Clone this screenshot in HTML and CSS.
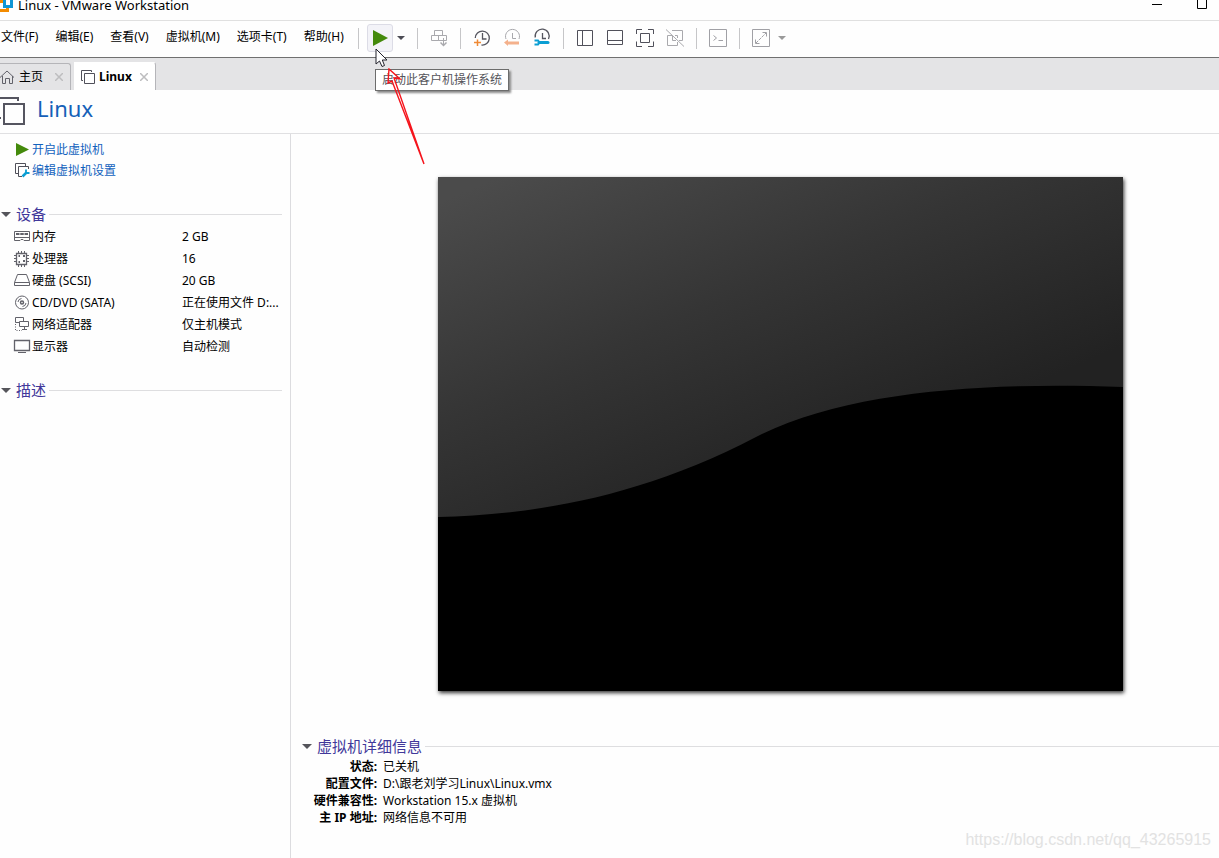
FILE: index.html
```html
<!DOCTYPE html>
<html lang="zh-CN">
<head>
<meta charset="utf-8">
<title>Linux - VMware Workstation</title>
<link rel="stylesheet" href="styles.css">
</head>
<body>
<header class="titlebar">
  <svg class="logo" width="14" height="13" viewBox="0 0 14 13" fill="none" stroke-width="3"><path d="M0 10.500H7.500V5" stroke="#f38b00"/><path d="M4.500 0V6.500H11.500V0" stroke="#0e95d4"/><path d="M0 1.500H3" stroke="#f38b00"/></svg>
  <h1 class="window-title">Linux - VMware Workstation</h1>
  <button class="win-button" aria-label="最小化"><svg width="12" height="12"><path d="M1 4.500H11" stroke="#000"/></svg></button>
  <button class="win-button" aria-label="最大化"><svg width="12" height="12"><path d="M1.500 0V8.500H10.500V0" fill="none" stroke="#000"/></svg></button>
</header>

<div class="menubar">
  <nav class="menus">
    <button>文件(F)</button><button>编辑(E)</button><button>查看(V)</button><button>虚拟机(M)</button><button>选项卡(T)</button><button>帮助(H)</button>
  </nav>
  <div class="toolbar">
    <span class="sep"></span>
    <div class="play-wrap">
      <button class="tool play" aria-label="启动此客户机操作系统"><svg width="16" height="16"><path d="M1 0L16 8L1 16Z" fill="#448a0c"/></svg></button>
      <div class="tooltip" role="tooltip">启动此客户机操作系统</div>
    </div>
    <button class="caret" aria-label="电源选项"><svg width="8" height="4"><path d="M0 0H8L4 4Z" fill="#4c4c54"/></svg></button>
    <span class="sep"></span>
    <button class="tool" aria-label="发送 Ctrl+Alt+Del"><svg width="20" height="20" fill="none" stroke="#a9a9ad"><path d="M5.500 2.500H13.500V7.500H5.500ZM2.500 7.500H9.500V12.500H2.500ZM9.500 7.500H17.500V12.500H9.500ZM14.500 10V17" /><path d="M11.500 14.500L14.500 17.500L17.500 14.500" stroke-width="1.500"/></svg></button>
    <span class="sep"></span>
    <button class="tool" aria-label="拍摄快照"><svg width="20" height="20" fill="none" stroke="#56565f"><path d="M3.300 10A7 7 0 1 1 9.500 17M10.500 5V11H14.500" stroke-width="1.300"/><path d="M5.500 11.500V18M2 14.500H9" stroke="#ef8a35" stroke-width="1.500"/></svg></button>
    <button class="tool" aria-label="恢复快照"><svg width="20" height="20" fill="none" stroke="#a9a9ad"><path d="M4 11A7 7 0 1 1 17 11M10.500 5V10.500H14"/><path d="M2 14.500L6 11.500V13.500H17V16.500H6V18Z" fill="#f4b18c" stroke="none"/></svg></button>
    <button class="tool" aria-label="管理快照"><svg width="20" height="20" fill="none" stroke="#56565f"><path d="M3.300 9.500A7 7 0 1 1 16.500 11M10.500 5V10.500H14" stroke-width="1.300"/><path d="M7 14.500H16" stroke="#0b9ed3" stroke-width="3" stroke-linecap="round"/><path d="M2.500 12.500H6L7.500 14.500L6 16.500H2.500" stroke="#0b9ed3" stroke-width="2"/></svg></button>
    <span class="sep"></span>
    <button class="tool" aria-label="显示库"><svg width="20" height="20" fill="none" stroke="#50505a"><path d="M2.500 2.500H17.500V17.500H2.500ZM7.500 2V18"/></svg></button>
    <button class="tool" aria-label="显示缩略图"><svg width="20" height="20" fill="none" stroke="#50505a"><path d="M2.500 2.500H17.500V16.500H2.500ZM2 12.500H18"/></svg></button>
    <button class="tool" aria-label="全屏"><svg width="20" height="20" fill="none" stroke="#50505a"><path d="M1.500 6V1.500H7M13 1.500H18.500V6M18.500 13.500V18.500H13M7 18.500H1.500V13.500M5.500 5.500H14.500V14.500H5.500Z"/></svg></button>
    <button class="tool" aria-label="Unity 模式"><svg width="20" height="20" fill="none" stroke="#a9a9ad"><path d="M7 2.500H17.500V12.500H14M7.500 7.500H2.500V17.500H12.500V14M7.500 8V12.500H11M10 7.500H12.500V10M1 1.500L19 18.500"/></svg></button>
    <span class="sep"></span>
    <button class="tool" aria-label="控制台"><svg width="20" height="20" fill="none" stroke="#a0a0a5"><path d="M1.500 1.500H18.500V18.500H1.500Z"/><path d="M5.500 7.500L8.500 10L5.500 12.500M10.500 12.500H15"/></svg></button>
    <span class="sep"></span>
    <button class="tool" aria-label="拉伸客户机"><svg width="20" height="20" fill="none" stroke="#a0a0a5"><path d="M1.500 1.500H18.500V18.500H1.500ZM11.500 4.500H15.500V8.500M4.500 11.500V15.500H8.500"/><path d="M5 15L15 5" stroke-dasharray="3 1"/></svg></button>
    <button class="caret" aria-label="拉伸选项"><svg width="8" height="4"><path d="M0 0H8L4 4Z" fill="#9a9a9a"/></svg></button>
  </div>
</div>

<div class="tabs">
  <div class="tab home">
    <svg width="14" height="14" fill="none" stroke="#62626a"><path d="M0 7.500L7 1L14 7.500M2.500 6V13.500H5.500V8.500H9.500V13.500H12.500V6"/></svg>
    <button class="tab-name">主页</button>
    <button class="close" aria-label="关闭主页"><svg width="8" height="8"><path d="M0 0L8 8M8 0L0 8" stroke="#bdbdbf" stroke-width="1.500"/></svg></button>
  </div>
  <div class="tab active">
    <svg width="14" height="14" fill="none" stroke="#50505a"><path d="M3.500 3.500H13.500V13.500H3.500ZM2 10.500H.5V.5H10.500V2"/></svg>
    <button class="tab-name">Linux</button>
    <button class="close" aria-label="关闭 Linux"><svg width="8" height="8"><path d="M0 0L8 8M8 0L0 8" stroke="#bdbdbf" stroke-width="1.500"/></svg></button>
  </div>
</div>

<div class="vm-header">
  <svg width="26" height="28" fill="none" stroke="#555560" stroke-width="2"><path d="M4 7H24V27H4ZM0 21H1M0 1H18V4"/></svg>
  <h2>Linux</h2>
</div>

<div class="workspace">
  <aside class="sidebar">
    <ul class="actions">
      <li><svg width="16" height="16"><path d="M1 1L14 7.500L1 14Z" fill="#448a0c"/></svg><a href="#">开启此虚拟机</a></li>
      <li><svg width="16" height="16" fill="none" stroke="#50505a"><path d="M3 10.500H.5V.5H10.500V3M7 13.500H3.500V3.500H13.500V6"/><path d="M7.500 13.500L11.500 9.500" stroke="#0b9ed3" stroke-width="2.500"/><path d="M11 6.500V10H14.500" stroke="#0b9ed3" stroke-width="1.800"/></svg><a href="#">编辑虚拟机设置</a></li>
    </ul>
    <section class="group">
      <h3><svg width="10" height="5"><path d="M0 0H10L5 5Z" fill="#55555b"/></svg><span>设备</span></h3>
      <table class="devices">
        <tr><th scope="row"><div><svg width="18" height="16" fill="none" stroke="#62626a"><path d="M1.500 2.500H16.500V11.500H11L10 10.500H8L7 11.500H1.500Z"/><path d="M3 5H15" stroke-width="2" stroke-dasharray="3.500 .75"/><path d="M2 8.500H16"/></svg>内存</div></th><td>2 GB</td></tr>
        <tr><th scope="row"><div><svg width="18" height="16" fill="none" stroke="#62626a"><path d="M3.500 2.500H13.500V13.500H3.500Z" stroke-width="1.300"/><path d="M5.500 0V2M8.500 0V2M11.500 0V2M5.500 14V16M8.500 14V16M11.500 14V16M1 4.500H3M1 7.500H3M1 10.500H3M14 4.500H16M14 7.500H16M14 10.500H16"/><path d="M5.500 5H7M10 5H12M5.500 11H7M10 10H12" stroke-width="2"/></svg>处理器</div></th><td>16</td></tr>
        <tr><th scope="row"><div><svg width="18" height="16" fill="none" stroke="#62626a"><path d="M4.500 1.500H13.500L16.500 9.500V12.500H1.500V9.500ZM1.500 9.500H16.500"/></svg>硬盘 (SCSI)</div></th><td>20 GB</td></tr>
        <tr><th scope="row"><div><svg width="18" height="16" fill="none" stroke="#62626a"><circle cx="9" cy="7.500" r="6.500"/><circle cx="9" cy="7.500" r="1.500" stroke-width="1.500"/><path d="M5 7A4 4 0 0 1 8.500 3.500M13 8A4 4 0 0 1 9.500 11.500"/></svg>CD/DVD (SATA)</div></th><td>正在使用文件 D:...</td></tr>
        <tr><th scope="row"><div><svg width="18" height="16" fill="none" stroke="#62626a"><path d="M6 5.500H2.500V.5H10.500V4M6.500 4.500H15.500V9.500H6.500ZM11.500 10V12M9 12.500H14"/><path d="M2.500 7V13.500H9" stroke-dasharray="1 1.500"/></svg>网络适配器</div></th><td>仅主机模式</td></tr>
        <tr><th scope="row"><div><svg width="18" height="16" fill="none" stroke="#62626a"><path d="M1.500 1.500H16.500V11.500H1.500Z" stroke-width="1.300"/><path d="M5 13.500H13"/></svg>显示器</div></th><td>自动检测</td></tr>
      </table>
    </section>
    <section class="group">
      <h3><svg width="10" height="5"><path d="M0 0H10L5 5Z" fill="#55555b"/></svg><span>描述</span></h3>
    </section>
  </aside>

  <main class="summary">
    <svg class="screen" viewBox="0 0 685 514" role="img" aria-label="虚拟机屏幕预览">
      <defs><linearGradient id="glow" gradientUnits="userSpaceOnUse" x1="60" y1="0" x2="220" y2="370"><stop offset="0" stop-color="#4b4b4b"/><stop offset=".5" stop-color="#353535"/><stop offset="1" stop-color="#222"/></linearGradient></defs>
      <rect width="685" height="514" fill="#000"/>
      <path d="M0 0H685V210C560 205 410 212 318 260C200 322 90 338 0 340Z" fill="url(#glow)"/>
    </svg>
    <section class="details">
      <h3><svg width="10" height="5"><path d="M0 0H10L5 5Z" fill="#55555b"/></svg><span>虚拟机详细信息</span></h3>
      <dl>
        <dt>状态:</dt><dd>已关机</dd>
        <dt>配置文件:</dt><dd>D:\跟老刘学习Linux\Linux.vmx</dd>
        <dt>硬件兼容性:</dt><dd>Workstation 15.x 虚拟机</dd>
        <dt>主 IP 地址:</dt><dd>网络信息不可用</dd>
      </dl>
    </section>
  </main>
</div>

<svg class="pointer" width="14" height="20"><path d="M1 1V16L4.500 13L7 18.500L9.500 17.500L7.300 12H12Z" fill="#fff" stroke="#22222c"/></svg>
<svg class="arrow" width="40" height="98" fill="none" stroke="#f5141c" stroke-width="1.400"><path d="M39 96L9 10L15 11L4 1L3 15L7 13Z"/></svg>
<div class="watermark">https://blog.csdn.net/qq_43265915</div>
</body>
</html>
```
FILE: styles.css
```css
* { box-sizing: border-box; }

body {
  margin: 0;
  min-height: 100vh;
  display: flex;
  flex-direction: column;
  position: relative;
  overflow-x: hidden;
  background: #fefefe;
  color: #000;
  font: 12px/16px "Noto Sans", "Noto Sans CJK SC", sans-serif;
}

button {
  padding: 0;
  border: 0;
  background: none;
  color: inherit;
  font: inherit;
}

svg { display: block; flex: none; }
h1, h2, h3, ul, dl, dd { margin: 0; padding: 0; font-weight: normal; }

.titlebar {
  display: flex;
  align-items: flex-start;
  height: 21px;
  padding-right: 11px;
  border-bottom: 1px solid #e0e0e0;
}
.logo { margin-right: 4px; }
.window-title {
  flex: 1;
  font-size: 13px;
  line-height: 10px;
}
.win-button + .win-button { margin-left: 33px; }

.menubar {
  display: flex;
  align-items: center;
  height: 37px;
  padding-bottom: 2px;
  border-bottom: 1px solid #707070;
}
.menus {
  display: flex;
  flex: 0 0 352px;
  gap: 17px;
  padding: 0 0 2px 1px;
  white-space: nowrap;
}
.toolbar { display: flex; align-items: center; }
.sep {
  width: 1px;
  height: 21px;
  margin: 0 6px;
  background: #c6c6c8;
}
.tool {
  display: flex;
  align-items: center;
  justify-content: center;
  width: 30px;
  height: 28px;
}
.play-wrap { position: relative; padding: 0 2px; }
.play {
  width: 26px;
  border: 1px solid #dcdce6;
  border-radius: 3px;
  background: #f3f3f8;
}
.caret {
  display: flex;
  align-items: center;
  width: 16px;
  height: 28px;
  padding-left: 2px;
}
.tooltip {
  position: absolute;
  z-index: 2;
  top: 45px;
  left: 10px;
  padding: 2px 6px;
  border: 1px solid #6c6c6c;
  background: #fff;
  box-shadow: 2px 2px 2px #8a8a8a;
  color: #55555b;
  white-space: nowrap;
}

.tabs {
  display: flex;
  align-items: flex-end;
  gap: 3px;
  height: 32px;
  background: #e4e4e6;
}
.tab {
  display: flex;
  align-items: center;
  height: 27px;
  border: 1px solid #b5b5b9;
  border-width: 1px 1px 0 0;
  border-radius: 0 3px 0 0;
}
.home { width: 71px; gap: 5px; }
.active {
  width: 82px;
  height: 28px;
  gap: 4px;
  padding-left: 7px;
  border-top-color: #fff;
  background: #fff;
  font-weight: bold;
}
.close { margin-left: auto; margin-right: 7px; }

.vm-header {
  display: flex;
  align-items: center;
  gap: 11px;
  height: 44px;
  padding-bottom: 2px;
  border-bottom: 1px solid #e0e0e2;
}
.vm-header h2 {
  padding-bottom: 5px;
  color: #1560b8;
  font-size: 22px;
  line-height: 28px;
}

.workspace { display: flex; flex: 1; }
.sidebar {
  flex: 0 0 291px;
  padding-top: 5px;
  border-right: 1px solid #dcdcdf;
}
.actions { list-style: none; padding-left: 15px; }
.actions li { display: flex; align-items: center; gap: 1px; height: 21px; }
.actions a { color: #1262bd; text-decoration: none; }

h3 {
  display: flex;
  align-items: center;
  height: 22px;
  color: #41389a;
  font-size: 15px;
  line-height: 22px;
}
h3 svg { margin: 0 5px 0 1px; }
h3::after {
  content: "";
  flex: 1;
  height: 1px;
  margin-left: 3px;
  background: #dedee0;
}
.group { margin: 22px 8px 0 0; }
.group + .group { margin-top: 21px; }

.devices {
  width: 100%;
  margin-top: 1px;
  border-collapse: collapse;
  table-layout: fixed;
}
.devices th, .devices td {
  height: 22px;
  padding: 0;
  font-weight: normal;
  text-align: left;
  white-space: nowrap;
}
.devices th { width: 182px; padding-left: 13px; }
.devices th div { display: flex; align-items: center; gap: 1px; }

.summary { flex: 1; min-width: 0; padding-top: 43px; }
.screen {
  width: calc(100% - 243px);
  margin-left: 147px;
  box-shadow: 1px 2px 4px #333;
}
.details { margin-top: 44px; }
.details h3 { padding-left: 10px; }
.details dl {
  display: grid;
  grid-template-columns: 86px 1fr;
  column-gap: 6px;
  margin-top: 1px;
  line-height: 17px;
}
.details dt { font-weight: bold; text-align: right; white-space: nowrap; }

.pointer {
  position: absolute;
  z-index: 3;
  left: 375px;
  top: 48px;
}
.arrow {
  position: absolute;
  z-index: 4;
  left: 385px;
  top: 68px;
}
.watermark {
  position: absolute;
  right: 8px;
  bottom: 8px;
  color: #e2e2e2;
  font: 16px/20px "Liberation Sans", sans-serif;
}
```
